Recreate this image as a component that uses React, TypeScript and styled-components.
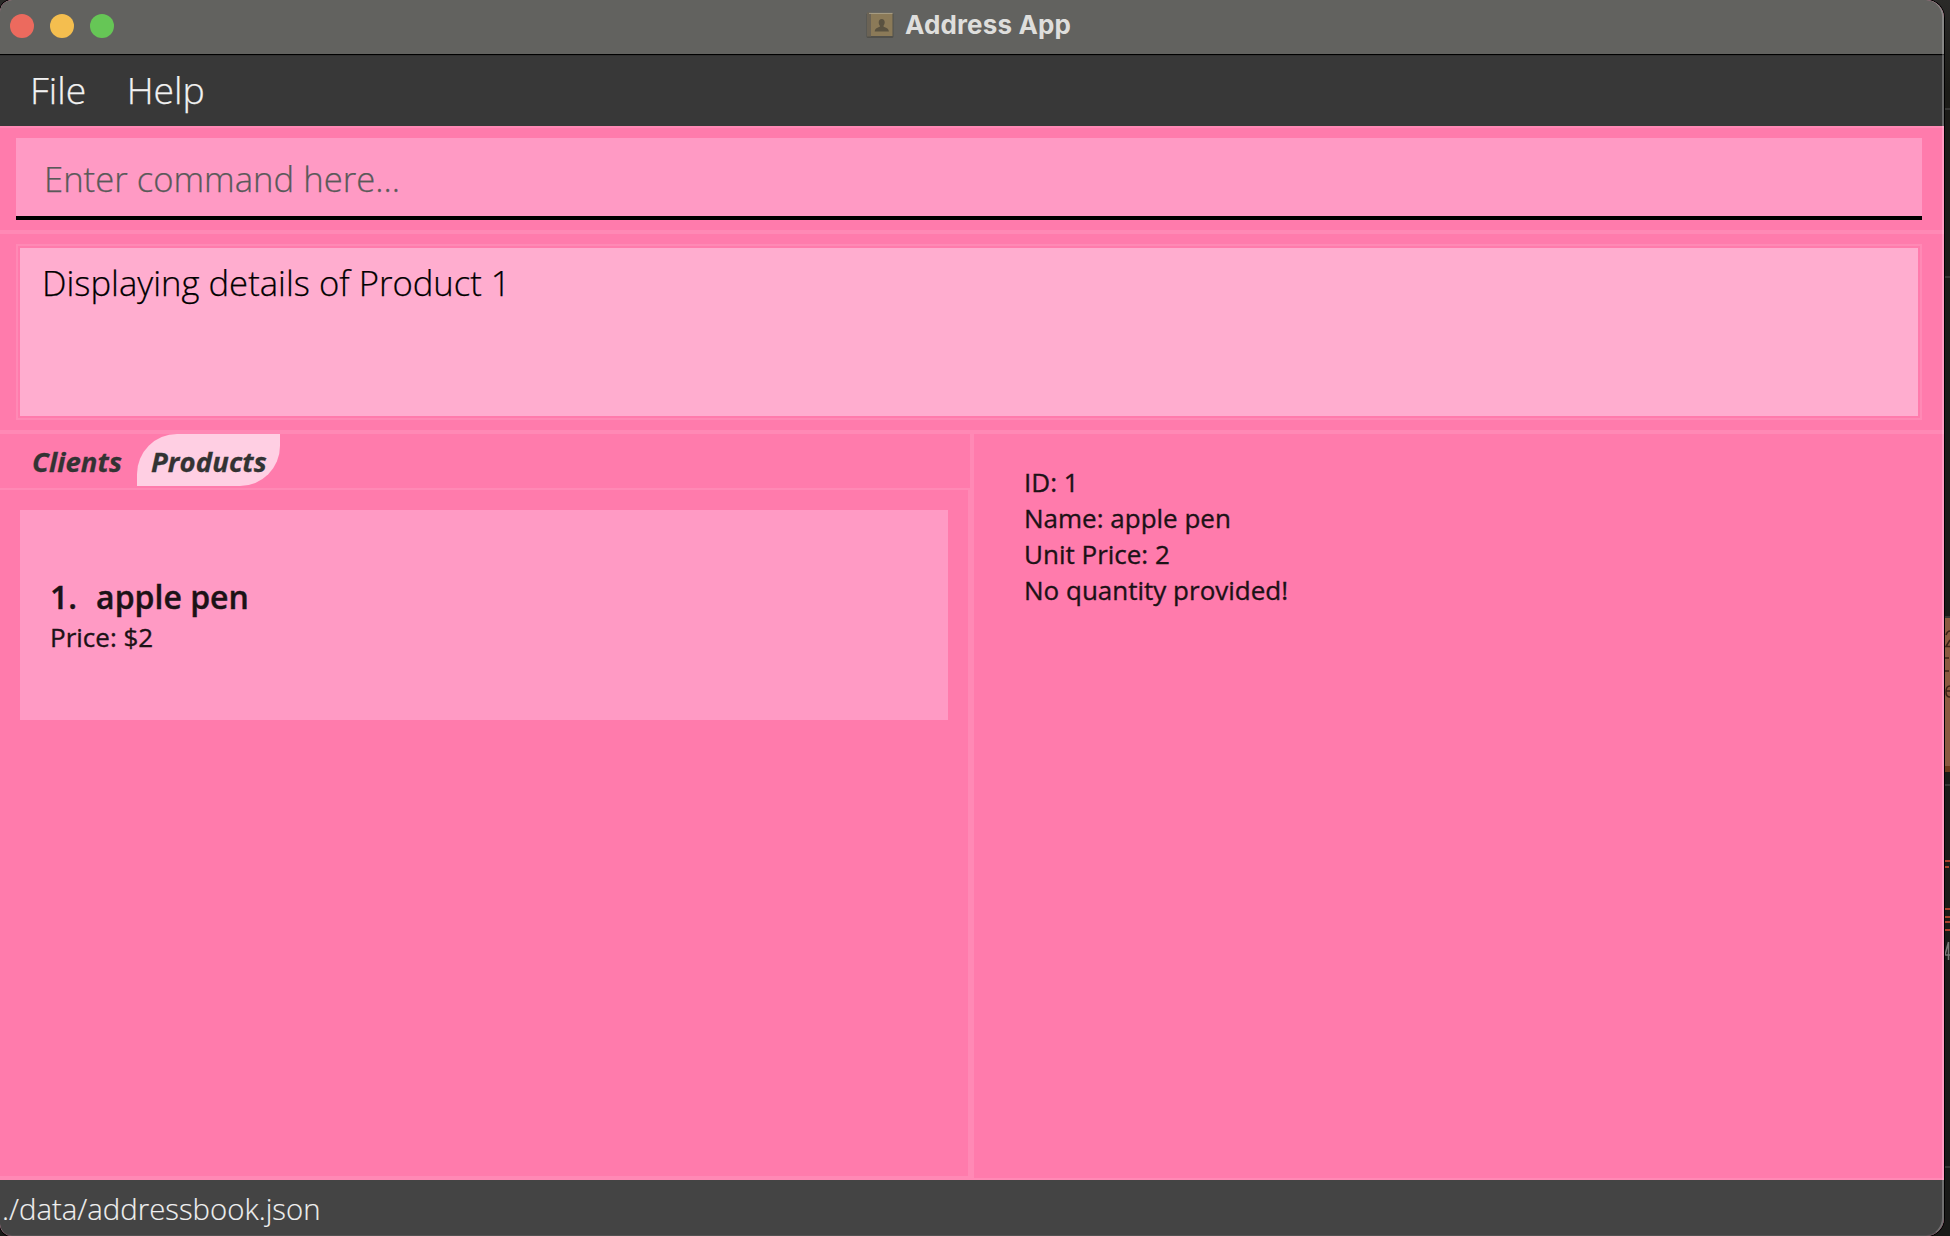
import React from "react";
import styled, { createGlobalStyle } from "styled-components";

const PINK = "#ff7bac";
const LINE = "#ff89b5";

const Global = createGlobalStyle`
  html, body { margin: 0; padding: 0; background: #1c1c18; }
  body { width: 1950px; height: 1236px; overflow: hidden; font-family: "Open Sans", "Noto Sans", sans-serif; }
  * { box-sizing: border-box; }
`;

const Desktop = styled.div`
  display: flex;
  width: 1950px;
  height: 1236px;
  background: linear-gradient(#2a2a28, #1c1c18 90px, #191a18);
  overflow: hidden;
`;

const Window = styled.div`
  position: relative;
  display: flex;
  flex-direction: column;
  width: 1944px;
  height: 1236px;
  border-radius: 12px 18px 18px 12px;
  overflow: hidden;
  background: ${PINK};
  box-shadow: 0 0 0 1px #000;
  z-index: 1;
  &::after {
    content: "";
    position: absolute;
    inset: -1px 0 0 -1px;
    border: 2px solid rgba(255, 255, 255, 0.24);
    border-top-width: 1px;
    border-left-width: 1px;
    border-bottom: 1px solid rgba(255, 255, 255, 0.08);
    border-radius: 13px 18px 18px 13px;
    pointer-events: none;
  }
`;

const TitleBar = styled.div`
  display: grid;
  grid-template-columns: 1fr auto 1fr;
  align-items: center;
  height: 56px;
  padding: 0 10px 4px;
  background: #62625f;
  border-bottom: 1px solid #303030;
  box-shadow: inset 0 -1px #000;
`;

const Lights = styled.div`
  display: flex;
  gap: 16px;
`;

const Light = styled.span<{ $color: string }>`
  width: 24px;
  height: 24px;
  border-radius: 50%;
  background: ${(p) => p.$color};
`;

const Title = styled.div`
  display: flex;
  align-items: center;
  gap: 11px;
  padding: 0 7px 2px 0;
  color: #dededc;
  font: 700 26px/30px Inter, sans-serif;
  letter-spacing: 0.15px;
`;

const MenuBar = styled.div`
  display: flex;
  gap: 40.5px;
  height: 70px;
  padding: 8px 30px 0;
  background: #383838;
`;

const MenuItem = styled.span`
  color: #f2f2f2;
  font-size: 37.33px;
  line-height: 51px;
  font-weight: 300;
  -webkit-text-stroke: 0.25px #f2f2f2;
`;

const Section = styled.div<{ $top: number; $height: number; $pad: string }>`
  height: ${(p) => p.$height}px;
  padding: ${(p) => p.$pad};
  border-top: ${(p) => p.$top}px solid ${LINE};
`;

const CommandInput = styled.input`
  display: block;
  width: 1906px;
  height: 82px;
  padding: 2px 28px 0;
  border: 0;
  border-bottom: 4px solid #000;
  border-radius: 0;
  outline: 0;
  background: #ff9ac4;
  font: 300 34.67px "Open Sans", "Noto Sans", sans-serif;
  &::placeholder { color: #595959; opacity: 1; -webkit-text-stroke: 0.25px #595959; }
`;

const ResultFrame = styled.div`
  width: 1906px;
  height: 176px;
  padding: 2px;
  border: 2px solid ${LINE};
`;

const ResultText = styled.div`
  height: 168px;
  padding: 11px 22px;
  background: #ffadcf;
  color: #000;
  font-size: 34.67px;
  line-height: 48px;
  font-weight: 300;
  -webkit-text-stroke: 0.25px #000;
`;

const Split = styled.div`
  display: grid;
  grid-template-columns: 970px 4px 1fr;
  height: 750px;
  border-top: 4px solid ${LINE};
`;

const LeftPane = styled.div`
  display: flex;
  flex-direction: column;
`;

const Tabs = styled.div`
  display: flex;
  height: 56px;
  padding-left: 18px;
  border-bottom: 2px solid ${LINE};
`;

const Tab = styled.div<{ $active?: boolean; $width: number }>`
  width: ${(p) => p.$width}px;
  height: 52px;
  padding-left: 14px;
  border-radius: 40px 0 40px 0;
  background: ${(p) => (p.$active ? "#ffcfe3" : "transparent")};
  color: #333;
  font-size: 27.5px;
  font-weight: 700;
  font-style: italic;
  line-height: 55px;
  letter-spacing: 0.1px;
  white-space: nowrap;
  -webkit-text-stroke: 0.3px #333;
`;

const ListPane = styled.div`
  flex: 1;
  padding: 20px;
  border-right: 2px solid ${LINE};
  border-bottom: 4px solid ${LINE};
`;

const Card = styled.div`
  width: 928px;
  height: 210px;
  padding: 65px 30px 0;
  background: #ff9ac4;
  color: #1c1216;
`;

const CardTitle = styled.div`
  display: flex;
  gap: 19px;
  font-size: 32px;
  line-height: 44px;
  font-weight: 600;
  -webkit-text-stroke: 0.4px #1c1216;
`;

const TextLine = styled.div`
  color: #1c1216;
  font-size: 26px;
  line-height: 36px;
  -webkit-text-stroke: 0.35px #1c1216;
`;

const Divider = styled.div`
  background: ${LINE};
`;

const Details = styled.div`
  padding: 30px 50px;
  border-bottom: 2px solid ${LINE};
`;

const StatusBar = styled.div`
  height: 56px;
  padding: 8px 2px;
  background: #444;
  color: #f0f0f0;
  font-size: 29.33px;
  line-height: 42px;
  font-weight: 300;
  -webkit-text-stroke: 0.15px #f0f0f0;
`;

const Backdrop = styled.svg`
  flex: none;
  width: 6px;
  height: 1236px;
`;

const BookIcon = () => (
  <svg width="28" height="26" viewBox="0 0 28 26">
    <rect x="0.5" y="1" width="27" height="25" rx="1.5" fill="#51504b" />
    <rect x="1" y="0.5" width="4" height="24" fill="#6b6355" />
    <rect x="5" y="1" width="21.5" height="23" fill="#8b7a58" />
    <path d="M3 1.4H26.5" stroke="#a89f88" strokeWidth="1" />
    <path d="M15.7 7c2 0 3 1.500 3 3.400 0 1.600-.8 2.700-1.300 3.500-.3 1.600 5.400 1.200 5.500 5.600H8.700c.1-4.400 5.600-4 5.300-5.600-.6-.8-1.300-1.900-1.300-3.500C12.700 8.500 13.700 7 15.700 7z" fill="#5a5240" />
  </svg>
);

export default function App() {
  return (
    <>
      <Global />
      <Desktop>
        <Window>
          <TitleBar>
            <Lights>
              <Light $color="#ec6a5e" />
              <Light $color="#f4be4f" />
              <Light $color="#66c656" />
            </Lights>
            <Title><BookIcon />Address App</Title>
          </TitleBar>
          <MenuBar>
            <MenuItem>File</MenuItem>
            <MenuItem>Help</MenuItem>
          </MenuBar>
          <Section $top={2} $height={104} $pad="10px 16px 0">
            <CommandInput placeholder="Enter command here..." />
          </Section>
          <Section $top={4} $height={200} $pad="10px 16px 0">
            <ResultFrame>
              <ResultText>Displaying details of Product 1</ResultText>
            </ResultFrame>
          </Section>
          <Split>
            <LeftPane>
              <Tabs>
                <Tab $width={119}>Clients</Tab>
                <Tab $width={143} $active>Products</Tab>
              </Tabs>
              <ListPane>
                <Card>
                  <CardTitle><span>1.</span><span>apple pen</span></CardTitle>
                  <TextLine>Price: $2</TextLine>
                </Card>
              </ListPane>
            </LeftPane>
            <Divider />
            <Details>
              <TextLine>ID: 1</TextLine>
              <TextLine>Name: apple pen</TextLine>
              <TextLine>Unit Price: 2</TextLine>
              <TextLine>No quantity provided!</TextLine>
            </Details>
          </Split>
          <StatusBar>./data/addressbook.json</StatusBar>
        </Window>
        <Backdrop viewBox="0 0 6 1236">
          <path d="M1 109H6M1 277H6M1 617H6M1 785H6M1 1167H6" stroke="#353533" strokeWidth="2" />
          <rect x="1" y="618" width="5" height="148" fill="#8b5a40" />
          <rect x="1" y="766" width="5" height="6" fill="#6b3a1c" />
          <path d="M2 635c1-3 2-4 4-4M6 640l-4 6.500h4" stroke="#3c2318" strokeWidth="1.6" fill="none" />
          <path d="M1 658H5M1 671H5" stroke="#3c2318" strokeWidth="1.5" />
          <path d="M6 686c-3 0-4 3-4 6s1 5 4 5M2 691h4" stroke="#3c2318" strokeWidth="1.5" fill="none" />
          <path d="M1 861H6M1 867H5M1 909H6M1 917H6M1 922H6M1 930H6" stroke="#a8402c" strokeWidth="2" />
          <path d="M1 955H6M4.500 942V960M4.500 942L1 955" stroke="#777775" strokeWidth="1.5" />
        </Backdrop>
      </Desktop>
    </>
  );
}
